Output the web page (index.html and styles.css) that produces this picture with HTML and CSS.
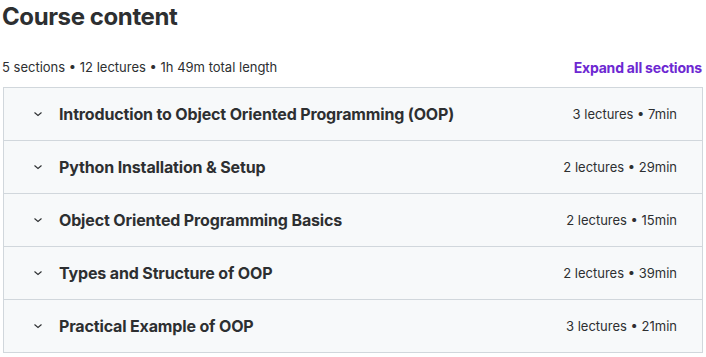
FILE: index.html
```html
<!DOCTYPE html>
<html lang="en">
<head>
  <meta charset="UTF-8">
  <title>Course content</title>
  <link rel="stylesheet" href="styles.css">
</head>
<body>
  <div class="course">
    <h2 class="course-title">Course content</h2>

    <div class="course-meta">
      <span>5 sections • 12 lectures • 1h 49m total length</span>
      <button class="expand-all">Expand all sections</button>
    </div>

    <div class="sections">
      <div class="section">
        <span class="chevron"><svg width="12" height="12" viewBox="0 0 12 12"><path d="M2.5 4.5 6 7.5 9.5 4.5" fill="none" stroke="#2d2f31" stroke-width="1.1"/></svg></span>
        <span class="section-name">Introduction to Object Oriented Programming (OOP)</span>
        <span class="section-info">3 lectures • 7min</span>
      </div>
      <div class="section">
        <span class="chevron"><svg width="12" height="12" viewBox="0 0 12 12"><path d="M2.5 4.5 6 7.5 9.5 4.5" fill="none" stroke="#2d2f31" stroke-width="1.1"/></svg></span>
        <span class="section-name">Python Installation &amp; Setup</span>
        <span class="section-info">2 lectures • 29min</span>
      </div>
      <div class="section">
        <span class="chevron"><svg width="12" height="12" viewBox="0 0 12 12"><path d="M2.5 4.5 6 7.5 9.5 4.5" fill="none" stroke="#2d2f31" stroke-width="1.1"/></svg></span>
        <span class="section-name">Object Oriented Programming Basics</span>
        <span class="section-info">2 lectures • 15min</span>
      </div>
      <div class="section">
        <span class="chevron"><svg width="12" height="12" viewBox="0 0 12 12"><path d="M2.5 4.5 6 7.5 9.5 4.5" fill="none" stroke="#2d2f31" stroke-width="1.1"/></svg></span>
        <span class="section-name">Types and Structure of OOP</span>
        <span class="section-info">2 lectures • 39min</span>
      </div>
      <div class="section">
        <span class="chevron"><svg width="12" height="12" viewBox="0 0 12 12"><path d="M2.5 4.5 6 7.5 9.5 4.5" fill="none" stroke="#2d2f31" stroke-width="1.1"/></svg></span>
        <span class="section-name">Practical Example of OOP</span>
        <span class="section-info">3 lectures • 21min</span>
      </div>
    </div>
  </div>
</body>
</html>
```

FILE: styles.css
```css
body {
  margin: 0;
  padding: 0;
  background: #fff;
  color: #2d2f31;
  font-family: Inter, 'Liberation Sans', sans-serif;
}

.course {
  width: 700px;
  padding: 0 3px;
}

.course-title {
  margin: 0;
  margin-left: -1px;
  padding-top: 3px;
  font-size: 24px;
  line-height: 28px;
  font-weight: 700;
  letter-spacing: -0.4px;
}

.course-meta {
  display: flex;
  justify-content: space-between;
  align-items: center;
  margin-top: 24px;
  margin-left: -1px;
  height: 24px;
  font-size: 13px;
}

.expand-all {
  border: none;
  background: none;
  padding: 0;
  margin-right: 1px;
  color: #6d28d2;
  font-family: inherit;
  font-size: 14px;
  font-weight: 700;
  letter-spacing: -0.2px;
  cursor: pointer;
}

.sections {
  margin-top: 8px;
  border: 1px solid #d1d7dc;
  border-bottom: none;
}

.section {
  display: flex;
  align-items: center;
  height: 52px;
  padding: 0 25px 0 28px;
  background: #f7f9fa;
  border-bottom: 1px solid #d1d7dc;
}

.chevron {
  display: flex;
  width: 12px;
  margin-right: 15px;
}

.section-name {
  flex: 1;
  font-size: 16px;
  font-weight: 700;
  letter-spacing: -0.15px;
}

.section-info {
  font-size: 13px;
  color: #2d2f31;
}
```
